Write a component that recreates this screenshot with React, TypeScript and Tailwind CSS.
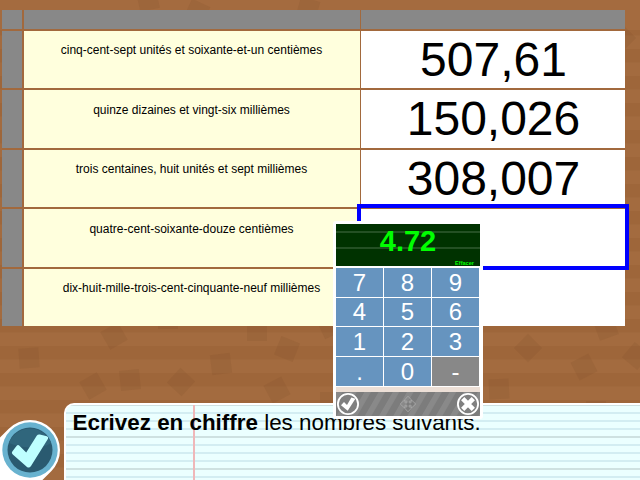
import React from "react";

const rows = [
  { words: "cinq-cent-sept unités et soixante-et-un centièmes", value: "507,61", height: "h-[57px]", pad: "pt-[10px]" },
  { words: "quinze dizaines et vingt-six millièmes", value: "150,026", height: "h-[58px]", pad: "pt-[11px]" },
  { words: "trois centaines, huit unités et sept millièmes", value: "308,007", height: "h-[57px]", pad: "pt-[10px]" },
  { words: "quatre-cent-soixante-douze centièmes", value: "", height: "h-[58px]", pad: "pt-[11px]" },
  { words: "dix-huit-mille-trois-cent-cinquante-neuf millièmes", value: "", height: "h-[57px]", pad: "pt-[10px]" },
];

const keys = ["7", "8", "9", "4", "5", "6", "1", "2", "3", ".", "0", "-"];

const tiles = [
  [29, 358, -4], [114, 336, -30], [93, 386, -30], [130, 380, -6], [181, 382, 43],
  [257, 331, 0], [221, 364, -7], [287, 349, 22], [277, 390, -28], [330, 402, 0],
  [499, 389, -3], [528, 348, 45], [584, 367, -27], [606, 328, -20], [636, 356, 40],
  [148, 0, -12], [197, 12, 25], [308, 9, 15], [622, 38, 45], [168, 319, 0],
  [330, 326, -25], [596, 411, 0],
];

function Wood() {
  return (
    <svg className="absolute inset-0" width="640" height="480">
      <defs>
        <pattern id="planks" width="640" height="27" y="9" patternUnits="userSpaceOnUse">
          <rect width="640" height="27" fill="#a36b3f" />
          <rect width="640" height="13.5" y="13" fill="#9e663a" />
        </pattern>
      </defs>
      <rect width="640" height="480" fill="url(#planks)" />
      <rect width="640" height="30" fill="#a46b3f" />
      {tiles.map(([x, y, a], i) => (
        <rect key={i} x={x - 10} y={y - 10} width="20" height="20" fill="#7d4b2c" fillOpacity=".17" transform={`rotate(${a} ${x} ${y})`} />
      ))}
    </svg>
  );
}

function Table() {
  return (
    <div className="relative flex w-[623px] flex-col gap-[2px] bg-[#a2693d]">
      <div className="flex h-[19px]">
        <div className="mr-[2px] w-5 bg-[#888888]" />
        <div className="mr-px w-[336px] bg-[#888888]" />
        <div className="w-[264px] bg-[#888888]" />
      </div>
      {rows.map((row) => (
        <div key={row.words} className={`flex ${row.height}`}>
          <div className="mr-[2px] w-5 bg-[#888888]" />
          <div className={`mr-px w-[336px] bg-[#ffffdd] pr-px text-center text-[12px] leading-[18px] ${row.pad}`}>{row.words}</div>
          <div className="flex w-[264px] justify-center bg-white pl-px text-[48px] leading-[58px]">{row.value}</div>
        </div>
      ))}
    </div>
  );
}

function Paper() {
  return (
    <div className="relative ml-16 h-[77px] overflow-hidden rounded-tl-[10px] border-t-2 border-l-2 border-white bg-[#ebffff]">
      <svg className="absolute top-0 left-0" width="574" height="75">
        {[-1, 7, 15, 23, 31, 39, 47, 55, 63, 71].map((y, i) => (
          <rect key={y} y={y} width="574" height="2" fill={i % 4 === 0 ? "#cee1e1" : "#d3edf2"} />
        ))}
        <rect x="127" width="2" height="75" fill="#efb7b9" />
      </svg>
      <p className="relative pt-[5px] pl-[6.5px] text-[22.4px] leading-[26px] whitespace-nowrap">
        <b>Ecrivez en chiffre</b> les nombres suivants.
      </p>
    </div>
  );
}

function Keypad() {
  return (
    <div className="absolute top-[221px] left-[333px] flex h-[198px] w-[150px] flex-col rounded-[3px] border-[3px] border-white bg-white text-white">
      <div className="relative h-[42px] bg-[#003200] text-[#00ff00]">
        <div className="absolute top-[7px] h-[2px] w-full bg-[#245024]" />
        <div className="absolute top-[23px] h-[2px] w-full bg-[#245024]" />
        <div className="relative pt-px text-center text-[29px] leading-[33px] font-bold">4.72</div>
        <div className="absolute right-[6px] bottom-0 text-[5.6px] leading-[6px] font-bold">Effacer</div>
      </div>
      <div className="mt-[2px] grid w-[143px] grid-cols-3 grid-rows-[29px_28px_29px_29px] gap-px">
        {keys.map((key) => (
          <div key={key} className={`flex items-center justify-center text-[24px] leading-[28px] ${key === "-" ? "bg-[#888888]" : "bg-[#6694bf]"}`}>{key}</div>
        ))}
      </div>
      <div className="mt-px h-[5px] bg-[#ecdfd6]" />
      <svg width="144" height="24">
        <defs>
          <pattern id="hatch" width="14.2" height="24" patternUnits="userSpaceOnUse" patternTransform="skewX(-30)">
            <rect width="14.2" height="24" fill="#7c7c7c" />
            <rect width="6.5" height="24" fill="#898989" />
          </pattern>
        </defs>
        <rect width="144" height="24" fill="url(#hatch)" />
        <circle cx="12" cy="12" r="10.1" fill="#808080" stroke="#fff" strokeWidth="1.8" />
        <path d="M5 13.2 8 10l3 3.1 4.4-7.5 4 1.1-7.7 12z" fill="#fff" />
        <g fill="none" stroke="#a6a6a6" strokeWidth=".9" strokeLinejoin="round">
          <path id="arm" d="M70.8 10.8V9h-2l-.3-1L72 4.2 75.5 8l-.3 1h-2v1.8" />
          <use href="#arm" transform="rotate(90 72 12)" />
          <use href="#arm" transform="rotate(180 72 12)" />
          <use href="#arm" transform="rotate(270 72 12)" />
        </g>
        <circle cx="132" cy="12" r="10.1" fill="#808080" stroke="#fff" strokeWidth="1.8" />
        <path d="m126.7 6.7 10.6 10.6m0-10.6-10.6 10.6" stroke="#fff" strokeWidth="4.6" />
      </svg>
    </div>
  );
}

function ConfirmButton() {
  return (
    <svg className="absolute bottom-0 left-0" width="64" height="64" viewBox="0 416 64 64">
      <path d="M30 450-10 490" stroke="#fff" strokeWidth="60" strokeLinecap="round" />
      <circle cx="30" cy="450" r="27.7" fill="#68b2cf" />
      <circle cx="30" cy="450" r="22.5" fill="#2a5a70" />
      <path d="M9 443a22.5 22.5 0 0 1 42 0c-8 6-28 6-42 0z" fill="#30667c" />
      <path d="m12.3 451.5 4.2-5.6q1.5-1.5 2.9-.1l6.8 6.6 10.5-16.6q1.2-1.8 3.2-1.3l7 1.7q2 .7 1.1 2.5L31 466q-1.8 2.5-4 1l-14.2-12.5q-1.7-1.3-.5-3z" fill="#beffff" />
    </svg>
  );
}

export default function App() {
  return (
    <main className="relative flex h-[480px] w-[640px] flex-col overflow-hidden bg-[#a46b3f] font-['Liberation_Sans',Arial,sans-serif] text-black">
      <Wood />
      <div className="relative h-[403px] shrink-0 pt-[10px] pl-[2px]">
        <Table />
      </div>
      <Paper />
      <ConfirmButton />
      <div className="absolute top-[204px] left-[357px] h-[66px] w-[272px] border-4 border-[#0000ff]" />
      <Keypad />
    </main>
  );
}
